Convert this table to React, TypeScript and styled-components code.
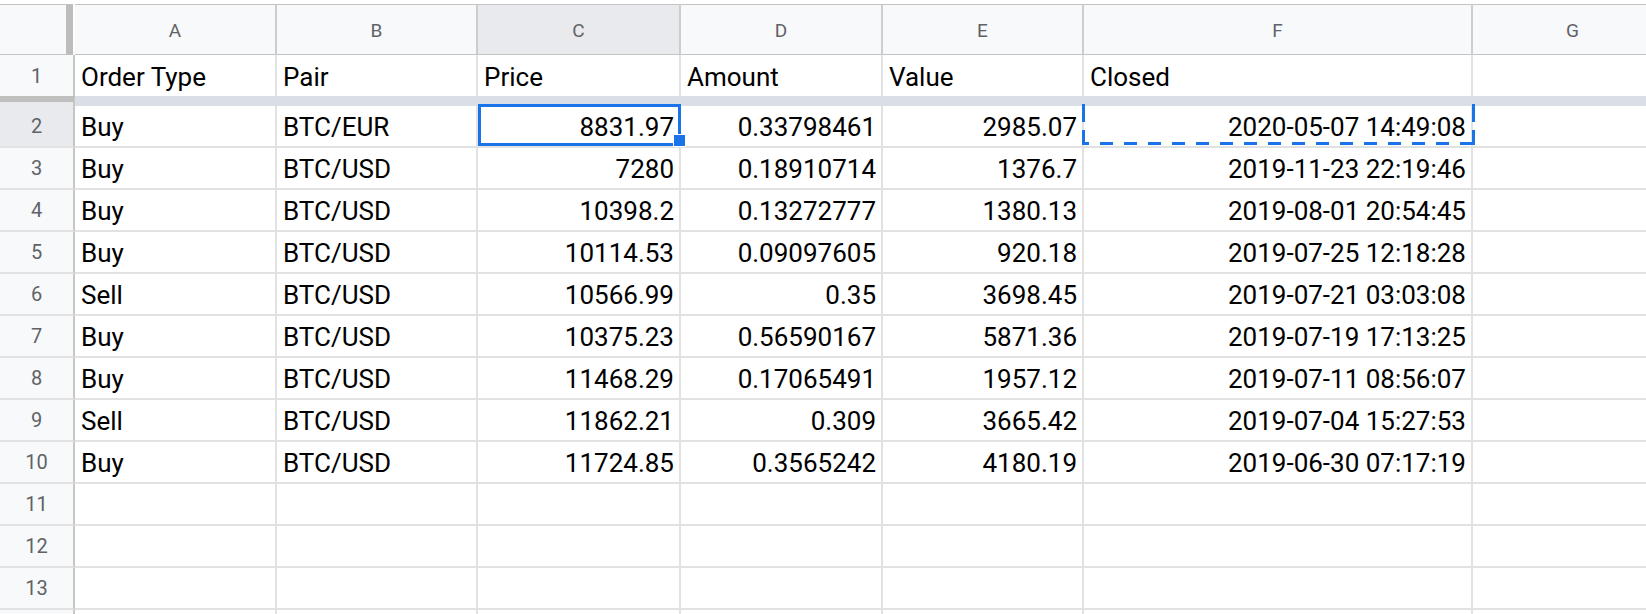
import React from "react";
import styled, { createGlobalStyle } from "styled-components";

const COLS = "75px 202px 201px 203px 202px 201px 389px 201px";
const GRID = "#e2e2e3";
const HEAD_LINE = "#c4c4c4";

const Global = createGlobalStyle`
  html, body { margin: 0; padding: 0; background: #fff; }
  body { font-family: Roboto, "Liberation Sans", Arial, sans-serif; overflow: hidden; }
  * { box-sizing: border-box; }
`;

const Sheet = styled.div`
  width: 1646px;
  height: 614px;
  padding-top: 4px;
  overflow: hidden;
`;

const Row = styled.div<{ $h: number }>`
  display: grid;
  grid-template-columns: ${COLS};
  height: ${(p) => p.$h}px;
`;

const Corner = styled.div`
  background: #f8f9fa;
  border-top: 1px solid ${HEAD_LINE};
  border-bottom: 1px solid ${HEAD_LINE};
  border-right: 7px solid #bdbdbd;
  margin-right: 2px;
`;

const ColHead = styled.div<{ $active?: boolean }>`
  display: flex;
  align-items: center;
  justify-content: center;
  padding-top: 2px;
  background: ${(p) => (p.$active ? "#e8eaed" : "#f8f9fa")};
  border-top: 1px solid ${HEAD_LINE};
  border-bottom: 1px solid ${HEAD_LINE};
  border-right: 2px solid #cdcdcd;
  color: #5f6368;
  font-size: 19px;
`;

const RowHead = styled.div<{ $active?: boolean; $last?: boolean }>`
  display: flex;
  align-items: center;
  justify-content: center;
  background: ${(p) => (p.$active ? "#e8eaed" : "#f8f9fa")};
  border-right: 2px solid #c6c6c6;
  border-bottom: ${(p) => (p.$last ? "none" : `2px solid ${GRID}`)};
  color: #5f6368;
  font-size: 20px;
`;

const Cell = styled.div<{ $right?: boolean; $last?: boolean }>`
  position: relative;
  display: flex;
  align-items: flex-end;
  justify-content: ${(p) => (p.$right ? "flex-end" : "flex-start")};
  padding: 0 5px 4px 6px;
  border-right: 2px solid ${GRID};
  border-bottom: ${(p) => (p.$last ? "none" : `2px solid ${GRID}`)};
  color: #000;
  font-size: 26px;
  line-height: 30px;
  white-space: nowrap;
`;

const FreezeHead = styled.div`
  background: #e8eaed;
  border-top: 6px solid #bfbfbf;
  border-right: 2px solid #c6c6c6;
`;

const FreezeBar = styled.div`
  grid-column: 2 / -1;
  background: #dadfe6;
`;

const Selection = styled.div`
  position: absolute;
  top: -2px;
  left: 0;
  right: -2px;
  bottom: 0;
  border: 3px solid #1a73e8;
  z-index: 2;
  pointer-events: none;
`;

const FillHandle = styled.div`
  position: absolute;
  right: -8px;
  bottom: -4px;
  width: 13px;
  height: 13px;
  background: #1a73e8;
  border: 1px solid #fff;
  z-index: 3;
`;

const Marquee = styled.svg`
  position: absolute;
  left: -2px;
  top: -2px;
  z-index: 2;
  pointer-events: none;
`;

const letters = ["A", "B", "C", "D", "E", "F", "G"];

const header = ["Order Type", "Pair", "Price", "Amount", "Value", "Closed", ""];

const data: string[][] = [
  ["Buy", "BTC/EUR", "8831.97", "0.33798461", "2985.07", "2020-05-07 14:49:08"],
  ["Buy", "BTC/USD", "7280", "0.18910714", "1376.7", "2019-11-23 22:19:46"],
  ["Buy", "BTC/USD", "10398.2", "0.13272777", "1380.13", "2019-08-01 20:54:45"],
  ["Buy", "BTC/USD", "10114.53", "0.09097605", "920.18", "2019-07-25 12:18:28"],
  ["Sell", "BTC/USD", "10566.99", "0.35", "3698.45", "2019-07-21 03:03:08"],
  ["Buy", "BTC/USD", "10375.23", "0.56590167", "5871.36", "2019-07-19 17:13:25"],
  ["Buy", "BTC/USD", "11468.29", "0.17065491", "1957.12", "2019-07-11 08:56:07"],
  ["Sell", "BTC/USD", "11862.21", "0.309", "3665.42", "2019-07-04 15:27:53"],
  ["Buy", "BTC/USD", "11724.85", "0.3565242", "4180.19", "2019-06-30 07:17:19"],
  ["", "", "", "", "", ""],
  ["", "", "", "", "", ""],
  ["", "", "", "", "", ""],
  ["", "", "", "", "", ""],
];

const LAST_LABELLED = 13;

const MarqueeBox: React.FC = () => {
  const w = 393;
  const h = 41;
  return (
    <Marquee width={w} height={h} viewBox={`0 0 ${w} ${h}`}>
      <g stroke="#1a73e8" strokeWidth={3} fill="none">
        <line x1={1.5} y1={0} x2={1.5} y2={h} strokeDasharray="18 8" />
        <line x1={w - 1.5} y1={0} x2={w - 1.5} y2={h} strokeDasharray="18 8" />
        <line x1={0} y1={h - 1.5} x2={w} y2={h - 1.5} strokeDasharray="13 11" strokeDashoffset={6} />
      </g>
    </Marquee>
  );
};

export default function App() {
  return (
    <>
      <Global />
      <Sheet>
        <Row $h={51}>
          <Corner />
          {letters.map((l) => (
            <ColHead key={l} $active={l === "C"}>
              {l}
            </ColHead>
          ))}
        </Row>
        <Row $h={41}>
          <RowHead $last>1</RowHead>
          {header.map((t, i) => (
            <Cell key={i} $last>
              {t}
            </Cell>
          ))}
        </Row>
        <Row $h={10}>
          <FreezeHead />
          <FreezeBar />
        </Row>
        {data.map((r, ri) => {
          const rowNum = ri + 2;
          return (
            <Row $h={42} key={rowNum}>
              <RowHead $active={rowNum === 2}>{rowNum <= LAST_LABELLED ? rowNum : ""}</RowHead>
              {r.map((v, ci) => (
                <Cell key={ci} $right={ci >= 2}>
                  {v}
                  {rowNum === 2 && ci === 2 && (
                    <Selection>
                      <FillHandle />
                    </Selection>
                  )}
                  {rowNum === 2 && ci === 5 && <MarqueeBox />}
                </Cell>
              ))}
              <Cell />
            </Row>
          );
        })}
      </Sheet>
    </>
  );
}
